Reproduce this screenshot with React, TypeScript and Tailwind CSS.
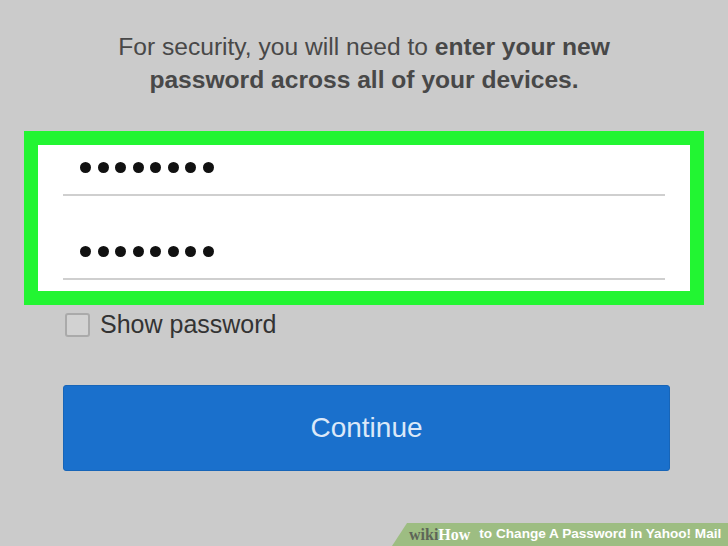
export default function App() {
  const dots = Array.from({ length: 8 })

  const Dots = () => (
    <div className="flex gap-[6.5px] pl-[17px]">
      {dots.map((_, i) => (
        <span key={i} className="block w-[11px] h-[11px] rounded-full bg-[#111]" />
      ))}
    </div>
  )

  return (
    <div
      className="relative w-[728px] h-[546px] overflow-hidden bg-[#cbcbcb] flex flex-col"
      style={{ fontFamily: '"Liberation Sans", Arial, sans-serif' }}
    >
      <p className="mt-[30px] text-center text-[24.6px] leading-[33px] text-[#484848] whitespace-nowrap">
        For security, you will need to <span className="font-bold">enter your new</span>
        <br />
        <span className="font-bold">password across all of your devices.</span>
      </p>

      <div className="mt-[35px] ml-[24px] w-[680px] h-[174px] bg-[#22f532] p-[14px]">
        <div className="w-full h-full bg-white flex flex-col px-[25px]">
          <div className="h-[51px] shrink-0 border-b-2 border-[#cfcfcf] pt-[17px]">
            <Dots />
          </div>
          <div className="h-[84px] shrink-0 border-b-2 border-[#cfcfcf] pt-[50px]">
            <Dots />
          </div>
        </div>
      </div>

      <label className="ml-[65px] mt-[5px] h-[29px] flex items-center gap-[10px]">
        <span className="block w-[25px] h-[24px] rounded-[3px] border-2 border-[#aaaaaa] bg-[#d2d2d2]" />
        <span className="text-[25px] text-[#333]">Show password</span>
      </label>

      <button className="mt-[46px] ml-[63px] w-[607px] h-[86px] rounded-[3px] bg-[#1a70cc] border border-[#1765b8] text-[28px] text-[#dbe8f8]">
        Continue
      </button>

      <div className="absolute bottom-0 right-0 h-[23px] w-[336px] bg-[#9dbd82] [clip-path:polygon(15px_0,100%_0,100%_100%,0_100%)] flex items-center pl-[17px] whitespace-nowrap text-[13.6px] font-bold text-white">
        <span className="text-[#5d6558] text-[16px]" style={{ fontFamily: '"Liberation Serif", serif' }}>wiki</span>
        <span className="text-[16px] mr-[9px]" style={{ fontFamily: '"Liberation Serif", serif' }}>How</span>
        <span>to Change A Password in Yahoo! Mail</span>
      </div>
    </div>
  )
}
